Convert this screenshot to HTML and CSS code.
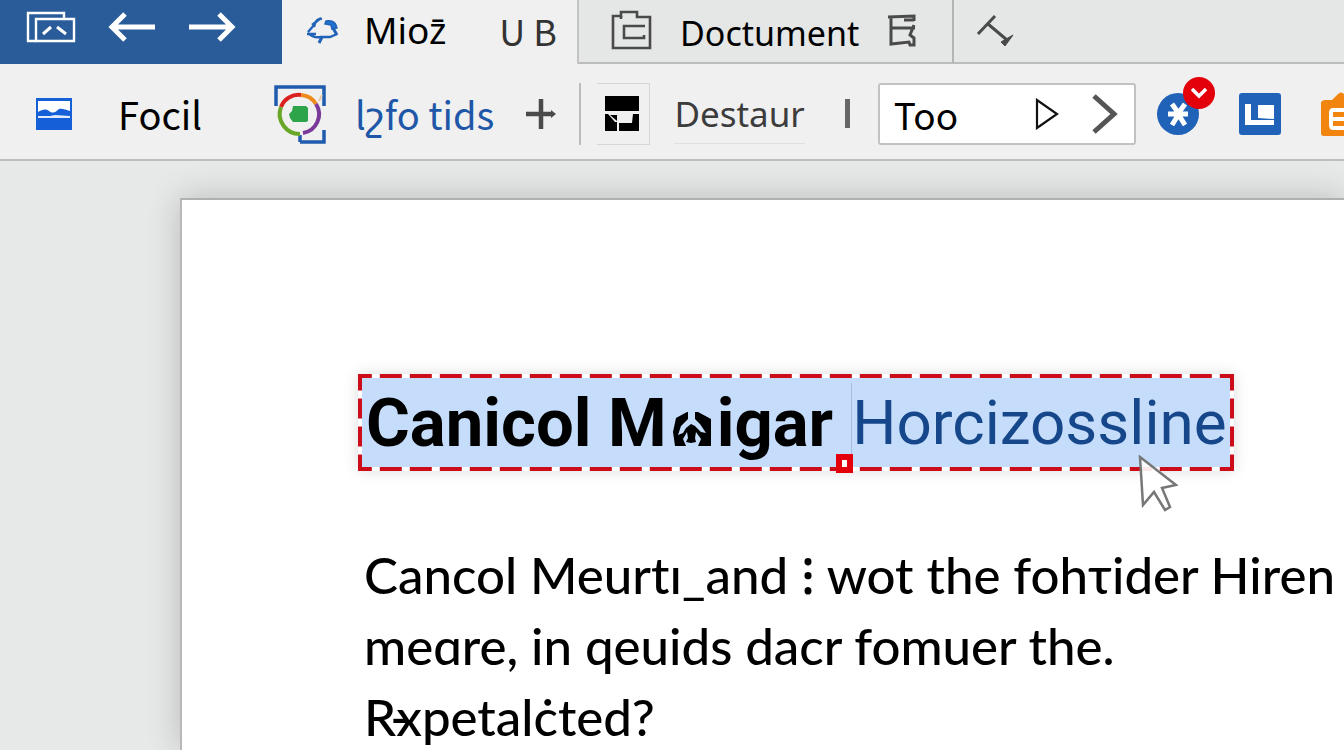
FILE: index.html
```html
<!DOCTYPE html>
<html lang="en">
<head>
    <meta charset="UTF-8">
    <meta name="viewport" content="width=device-width, initial-scale=1.0">
    <title>Doctument</title>
    <link rel="stylesheet" href="styles.css">
</head>
<body>
    <header class="title-bar">
        <div class="quick-access">
            <button class="icon-button" aria-label="Windows">
                <svg width="50" height="34" viewBox="0 0 50 34" fill="none" stroke="#fff" stroke-width="2.4">
                    <path d="M38 8V3H2v28h8"/>
                    <path d="M10 31V9h38v22z"/>
                    <path d="M17 24l8-7M31 17l9 7" stroke-width="3"/>
                </svg>
            </button>
            <button class="icon-button" aria-label="Back">
                <svg width="48" height="30" viewBox="0 0 48 30" fill="none" stroke="#fff" stroke-width="5">
                    <path d="M47 15H4M17 2L4 15l13 13"/>
                </svg>
            </button>
            <button class="icon-button" aria-label="Forward">
                <svg width="48" height="30" viewBox="0 0 48 30" fill="none" stroke="#fff" stroke-width="5">
                    <path d="M1 15h43M31 2l13 13-13 13"/>
                </svg>
            </button>
        </div>
        <div class="tab active">
            <svg width="34" height="28" viewBox="0 0 34 28" fill="none" stroke="#1f62b8" stroke-width="2.4">
                <path d="M16 3c-5-1-7 3-8 8M9 8l-7 8M2 17c4 4 8 5 13 4h9l7-3M1 18h9M6 9l9-7"/>
                <path d="M20 5c6-1 10 1 11 7l-5 1-1-4-6-1z" fill="#1f74d0" stroke-width="1.5"/>
                <path d="M27 12l4 7M16 21l-3 6" stroke-width="3"/>
            </svg>
            <span class="tab-name">Mioz̄</span>
            <button class="format">U B</button>
        </div>
        <div class="tab">
            <svg width="42" height="42" viewBox="0 0 42 42" fill="none" stroke="#4a4a4a" stroke-width="2.6">
                <path d="M2 38V6h8V2h16v5h13v31z"/>
                <path d="M10 6v3M34 16H13v12h20v-3"/>
            </svg>
            <span class="doc-name">Doctument</span>
            <button class="icon-button" aria-label="Save">
                <svg width="32" height="36" viewBox="0 0 32 36" fill="none" stroke="#4a4a4a" stroke-width="3">
                    <path d="M2 4l26-1v5M5 4v27l18-2 1 3h4v-7l-4-3 4-10M5 15h24M18 7h10"/>
                </svg>
            </button>
        </div>
        <button class="icon-button draw" aria-label="Draw line">
            <svg width="40" height="36" viewBox="0 0 40 36" fill="none" stroke="#4a4a4a" stroke-width="3">
                <path d="M2 21L19 3M12 11l19 16"/>
                <path d="M37 22l-8 11-4-4z" fill="#4a4a4a" stroke-width="1"/>
            </svg>
        </button>
    </header>

    <nav class="toolbar">
        <button class="tool">
            <svg width="36" height="32" viewBox="0 0 36 32">
                <path d="M0 0h36v32H0z" fill="#1560d8"/>
                <path d="M2 3h32v10c-4-1-8-3-11-2-3 3-6 5-10 2-4-3-7-1-11 1z" fill="#fff"/>
                <path d="M2 18h12l5-1 15 1v2H2z" fill="#dfeafa"/>
            </svg>
            <span class="file-name">Focil</span>
        </button>
        <button class="tool info">
            <svg width="54" height="60" viewBox="0 0 54 60" fill="none" stroke-width="4">
                <path d="M3 22V3h48v19M27 58h24V46M27 58v-7" stroke="#1f5cb0" stroke-width="3.5"/>
                <path d="M8 23a19 19 0 0 1 20-12" stroke="#dc2020"/>
                <path d="M28 11a19 19 0 0 1 15 9" stroke="#ef8a1c"/>
                <path d="M43 20a19 19 0 0 1-13 29" stroke="#7a3a9a"/>
                <path d="M27 50A20 20 0 0 1 8 23" stroke="#68a628"/>
                <path d="M46 17l3-6" stroke="#e8c9a8" stroke-width="2"/>
                <path d="M20 22h13l2 2v13l-2 1H20l-3-4-1-4 3-3z" fill="#2da44a"/>
            </svg>
            <span class="info-name">lշfo tids</span>
        </button>
        <button class="icon-button add" aria-label="Add">
            <svg width="32" height="30" viewBox="0 0 32 30" fill="none" stroke="#4a4a4a" stroke-width="4.5">
                <path d="M16 0v30M1 15h26"/>
                <path d="M26 11l5 4-5 4z" fill="#4a4a4a" stroke="none"/>
            </svg>
        </button>
        <button class="icon-button layout" aria-label="Layout">
            <svg width="36" height="36" viewBox="0 0 36 36">
                <path d="M1 0h34v15H1zM1 18h3l7 8h2v9H1zM15 27h13l1-9h6v17H15z"/>
                <path d="M6 19h7v6z"/>
            </svg>
        </button>
        <button class="tool restore">Destaur</button>
        <span class="bar"></span>
        <div class="search">
            <input type="text" value="Too" aria-label="Tool">
            <button class="icon-button" aria-label="Run">
                <svg width="26" height="32" viewBox="0 0 26 32" fill="#fff" stroke="#111" stroke-width="2.2">
                    <path d="M3 2v28l20-14z"/>
                </svg>
            </button>
            <button class="icon-button" aria-label="Next">
                <svg width="26" height="40" viewBox="0 0 26 40" fill="none" stroke="#555" stroke-width="5">
                    <path d="M2 2l20 18L2 38"/>
                </svg>
            </button>
        </div>
        <button class="icon-button sync" aria-label="Sync">
            <svg width="42" height="42" viewBox="0 0 42 42">
                <circle cx="21" cy="21" r="21" fill="#1f62b8"/>
                <path d="M15 11l5 7h3l5-7M11 21h20M15 32l5-8h3l5 8" fill="none" stroke="#fff" stroke-width="5"/>
            </svg>
            <span class="badge">
                <svg width="18" height="12" viewBox="0 0 18 12" fill="none" stroke="#fff" stroke-width="3.5">
                    <path d="M2 2l7 7 7-7"/>
                </svg>
            </span>
        </button>
        <button class="icon-button" aria-label="Panels">
            <svg width="42" height="42" viewBox="0 0 42 42">
                <rect width="42" height="42" rx="3" fill="#1f62b8"/>
                <path d="M6 11h6v16h23v5H6zM19 12h16v14l-16-1z" fill="#fff"/>
            </svg>
        </button>
        <button class="icon-button" aria-label="Store">
            <svg width="44" height="44" viewBox="0 0 44 44">
                <path d="M0 10l3-2h8l6-6q3-3 6 0l6 6h12l3 2v31q0 3-3 3H3q-3 0-3-3z" fill="#f28410"/>
                <path d="M34 18H12q-2 0-2 3v12q0 3 2 3h22M11 27h22" fill="none" stroke="#fff" stroke-width="4"/>
            </svg>
        </button>
    </nav>

    <main class="workspace">
        <article class="page">
            <h1 class="selection">
                <span class="heading">Canicol M<svg width="38" height="34" viewBox="0 0 38 34">
                    <path d="M3 6L14 0h11l13 7v27H2L0 20z"/>
                    <path d="M15 0h7v7l5 5 6 9-5-1-6-6-4-2-5 4-3 5-5 2 3-9 7-7z" fill="#c5dcfb"/>
                    <path d="M14 20l-4 7 3 7h12l3-7-5-7-1 6 1 4-5 1-5-1 2-4z" fill="#c5dcfb"/>
                </svg>igar</span>
                <a href="#" class="heading-link">Horcizossline</a>
                <span class="handle"></span>
                <svg class="pointer" width="40" height="58" viewBox="0 0 40 58">
                    <path d="M2 2l36 28-14 3 8 19-5 3-11-18-11 13z" fill="#fff" fill-opacity=".9" stroke="#777" stroke-width="2.5"/>
                </svg>
            </h1>
            <p class="text">Cancol Meurtı_and ⁝ wot the fohτider Hiren<br>
            meɑre, in qeuids dacr fomuer the.<br>
            R<span class="struck">x</span>petalċted?</p>
        </article>
    </main>
</body>
</html>
```
FILE: styles.css
```css
* {
    box-sizing: border-box;
}
body {
    margin: 0;
    height: 100vh;
    display: flex;
    flex-direction: column;
    overflow: hidden;
    background: #e7e8e8;
    color: #000;
    font-family: "Noto Sans", sans-serif;
}
button {
    border: none;
    padding: 0;
    background: none;
    color: inherit;
    font: inherit;
    cursor: pointer;
}
svg {
    display: block;
    flex: none;
}
.icon-button {
    display: flex;
    flex: none;
}
.title-bar {
    display: flex;
    flex: none;
    height: 64px;
    background: #e5e6e6;
    white-space: nowrap;
}
.quick-access {
    display: flex;
    flex: none;
    align-items: center;
    gap: 32px;
    width: 282px;
    padding: 0 0 11px 26px;
    background: #2a5c9a;
}
.tab {
    display: flex;
    flex: none;
    align-items: center;
    width: 375px;
    padding-left: 32px;
    gap: 27px;
    border-right: 2px solid #b4b4b4;
    border-bottom: 2px solid #bcbcbc;
}
.tab.active {
    width: 297px;
    padding: 0 0 4px 24px;
    gap: 24px;
    border-right: 2px solid #c4c4c4;
    border-bottom: none;
    background: #f0f0f0;
}
.tab-name {
    font-size: 37px;
    line-height: 48px;
}
.file-name {
    font-family: "Noto Sans CJK SC", sans-serif;
    font-size: 38px;
    line-height: 48px;
}
.format {
    margin-left: auto;
    margin-right: 20px;
    color: #333;
    font-size: 36px;
    line-height: 48px;
    font-family: "Noto Sans CJK SC", sans-serif;
}
.doc-name {
    padding-top: 4px;
    font-size: 34px;
    line-height: 48px;
}
.draw {
    flex: 1;
    align-items: center;
    padding-left: 22px;
    border-bottom: 2px solid #bcbcbc;
}
.toolbar {
    display: flex;
    flex: none;
    align-items: center;
    height: 97px;
    padding: 4px 0 0 36px;
    border-bottom: 2px solid #bebebe;
    background: #f0f0f0;
    white-space: nowrap;
}
.tool {
    display: flex;
    flex: none;
    align-items: center;
    gap: 46px;
}
.info {
    gap: 28px;
    margin-left: 71px;
    color: #1f57a8;
}
.info-name {
    font-family: "Noto Sans CJK SC", "DejaVu Sans", sans-serif;
    font-size: 38px;
    line-height: 48px;
}
.add {
    margin-left: 31px;
    padding: 16px 22px 16px 0;
    border-right: 2px solid #bbb;
}
.layout {
    margin-left: 16px;
    padding: 12px 9px 12px 7px;
    border: 1px solid #d6d6d6;
    border-left: none;
}
.restore {
    height: 60px;
    margin-left: 24px;
    color: #3c3c3c;
    font-size: 35px;
    border-bottom: 1px solid #e0e0e0;
}
.bar {
    flex: none;
    width: 5px;
    height: 29px;
    margin: 0 28px 0 40px;
    background: #666;
}
.search {
    display: flex;
    flex: none;
    align-items: center;
    gap: 32px;
    width: 258px;
    height: 62px;
    padding: 0 16px 0 14px;
    border: 2px solid #c2c2c2;
    border-radius: 3px;
    background: #fff;
}
.search input {
    flex: 1;
    min-width: 0;
    padding: 0;
    border: none;
    outline: none;
    background: none;
    color: #000;
    font-family: "Noto Sans CJK SC", sans-serif;
    font-size: 37px;
    line-height: 48px;
}
.toolbar > .search ~ .icon-button {
    margin-left: 40px;
}
.toolbar > .search + .sync {
    position: relative;
    margin-left: 21px;
}
.badge {
    position: absolute;
    top: -16px;
    left: 26px;
    display: flex;
    align-items: center;
    justify-content: center;
    width: 32px;
    height: 32px;
    border-radius: 50%;
    background: #e3000b;
}
.workspace {
    display: flex;
    flex: 1;
    min-height: 0;
    padding: 37px 0 0 180px;
}
.page {
    flex: 1;
    padding: 174px 0 0 176px;
    border-top: 2px solid #b0b0b0;
    border-left: 2px solid #b8b8b8;
    background: #fff;
    box-shadow: 0 0 32px rgba(0, 0, 0, 0.2);
    white-space: nowrap;
}
.selection {
    --dash-x: linear-gradient(90deg, #cc0c18 11px, #fff 11px 19px, #cc0c18 19px);
    --dash-y: linear-gradient(#cc0c18 10px, #fff 10px 18px, #cc0c18 18px);
    position: relative;
    display: flex;
    align-items: center;
    width: max-content;
    height: 97px;
    margin: 0;
    padding: 0 7px 0 8px;
    background:
        var(--dash-x) center top / 30px 4px repeat-x,
        var(--dash-x) center bottom / 30px 4px repeat-x,
        var(--dash-y) left center / 4px 28px repeat-y,
        var(--dash-y) right center / 4px 28px repeat-y,
        #c5dcfb;
    box-shadow: 0 0 14px rgba(0, 0, 0, 0.14);
    font-family: Roboto, sans-serif;
    line-height: 80px;
}
.heading {
    padding-right: 18px;
    border-right: 1px solid #a9bedd;
    font-size: 67px;
    font-weight: 700;
}
.heading svg {
    display: inline-block;
    margin: 0 6px;
    vertical-align: baseline;
}
.heading-link {
    color: #16478a;
    font-size: 62px;
    font-weight: 400;
    text-decoration: none;
}
.handle {
    position: absolute;
    left: 478px;
    bottom: -2px;
    width: 17px;
    height: 19px;
    border: 6px solid #e3000b;
    background: #fff;
}
.pointer {
    position: absolute;
    right: 56px;
    bottom: -42px;
}
.text {
    margin: 68px 0 0 6px;
    font-family: Lato, "Noto Sans", "DejaVu Sans", sans-serif;
    font-size: 51px;
    font-weight: 500;
    font-variant-ligatures: none;
    line-height: 71px;
}
.struck {
    position: relative;
}
.struck::before {
    content: "-";
    position: absolute;
    left: -6px;
}
```
